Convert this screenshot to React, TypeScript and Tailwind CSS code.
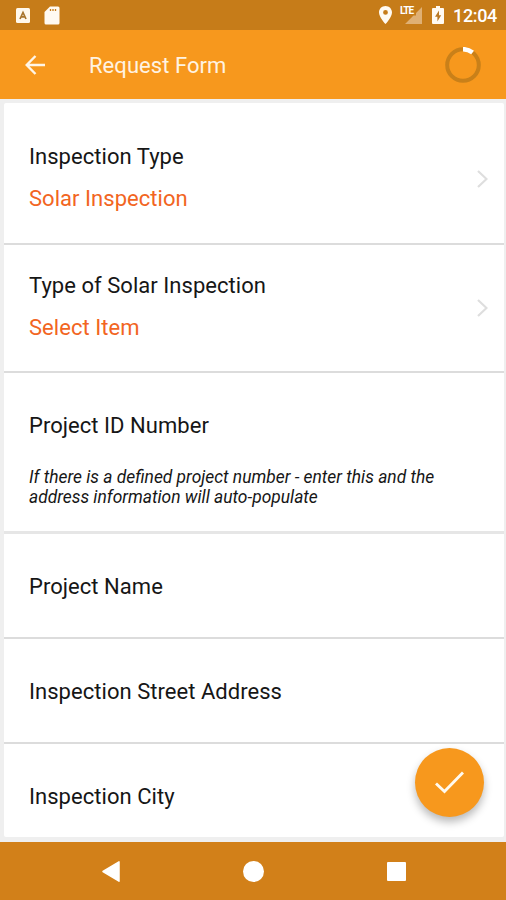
import type { ReactNode } from "react";

function StatusBar() {
  return (
    <div className="flex h-[30px] shrink-0 items-center bg-[#c67c19] text-white">
      <svg className="ml-4 h-[15px] w-[14px]" viewBox="0 0 14 15">
        <rect width="14" height="15" rx="1.5" fill="#fff8ec" />
        <path d="M4 11 L7 4.5 L10 11 M5.2 8.8 H8.8" fill="none" stroke="#a8742c" strokeWidth="1.7" />
      </svg>
      <svg className="ml-[14px] h-[19px] w-4" viewBox="0 0 16 19">
        <path d="M6 0.5 H14 Q15.5 0.5 15.5 2 V17 Q15.5 18.5 14 18.5 H2 Q0.5 18.5 0.5 17 V6 Z" fill="#fffaf2" />
        <path d="M6.5 3 V5 M9 3 V5 M11.5 3 V5" stroke="#c67c19" strokeWidth="1.3" />
      </svg>
      <svg className="ml-auto h-[18px] w-[13px]" viewBox="0 0 13 18">
        <path
          fillRule="evenodd"
          d="M6.5 0 C2.9 0 0 2.8 0 6.4 C0 11 6.5 18 6.5 18 S13 11 13 6.4 C13 2.8 10.1 0 6.5 0 Z M6.5 4 A2.4 2.4 0 1 1 6.5 8.8 A2.4 2.4 0 1 1 6.5 4 Z"
          fill="#fffaf2"
        />
      </svg>
      <div className="ml-[8px] flex h-[18px] w-[22px] items-start">
        <span className="w-[13px] text-[10px] leading-[10px] font-bold tracking-[-1px]">LTE</span>
        <svg className="-ml-[8px] h-[18px] w-[17px] shrink-0" viewBox="0 0 17 18">
          <path d="M17 1 V18 H0 L8.5 9.5 H11 V7 Z" fill="#dfb074" />
        </svg>
      </div>
      <svg className="ml-[10px] h-[18px] w-3" viewBox="0 0 12 18">
        <path d="M4 0 H8 V2 H11 Q12 2 12 3 V17 Q12 18 11 18 H1 Q0 18 0 17 V3 Q0 2 1 2 H4 Z" fill="#fffaf2" />
        <path d="M7 4.5 L3 10.8 H5.4 V15.5 L9.2 9.2 H7 Z" fill="#b97824" />
      </svg>
      <span className="mr-[9px] ml-[9px] w-[44px] pt-[2px] text-[18px] leading-[20px] font-medium tracking-[-0.35px] whitespace-nowrap">
        12:04
      </span>
    </div>
  );
}

function AppBar() {
  return (
    <header className="flex h-[69px] shrink-0 items-center bg-[#f7981d] text-white">
      <svg className="ml-[25px] h-5 w-5" viewBox="0 0 20 20" fill="none" stroke="#fff5e6" strokeWidth="2.4">
        <path d="M20 10 H2 M10.5 1 L1.7 10 L10.5 19" />
      </svg>
      <h1 className="ml-[44px] pt-[3px] text-[22px] leading-[26px] font-normal tracking-[0.05px] text-[#fff3e2]">
        Request Form
      </h1>
      <svg className="mr-[25px] ml-auto h-9 w-9" viewBox="0 0 36 36" fill="none" strokeWidth="4">
        <circle cx="18" cy="18" r="15.8" stroke="#c98019" />
        <path d="M18 2.2 A15.8 15.8 0 0 1 27.6 5.5" stroke="#fff" strokeWidth="4.6" />
      </svg>
    </header>
  );
}

function Label({ children }: { children: ReactNode }) {
  return <div className="text-[22px] leading-[26px] tracking-[0.04px] text-[#161616]">{children}</div>;
}

function SelectRow({ label, value, className }: { label: string; value: string; className: string }) {
  return (
    <div className={`flex items-start justify-between border-b-2 border-[#dcdcdc] pr-[16px] pl-[25px] ${className}`}>
      <div>
        <Label>{label}</Label>
        <div className="mt-4 text-[22px] leading-[26px] tracking-[0.04px] text-[#f26522]">{value}</div>
      </div>
      <svg className="mt-[26px] h-[18px] w-[11px]" viewBox="0 0 11 18" fill="none" stroke="#dedede" strokeWidth="2.2">
        <path d="M1 1 L9.5 9 L1 17" />
      </svg>
    </div>
  );
}

export default function App() {
  return (
    <div className="flex h-[900px] w-[506px] flex-col overflow-hidden bg-[#efefef] font-['Roboto',sans-serif]">
      <StatusBar />
      <AppBar />
      <main className="relative h-[743px] shrink-0 pt-1 pr-[2px] pl-1">
        <div className="h-[734px] overflow-hidden rounded-[2px] bg-white">
          <SelectRow label="Inspection Type" value="Solar Inspection" className="h-[142px] pt-[41px]" />
          <SelectRow label="Type of Solar Inspection" value="Select Item" className="h-[128px] pt-[27.5px]" />
          <div className="h-[161px] border-b-[3px] border-[#e6e6e6] pt-[40px] pl-[25px]">
            <Label>Project ID Number</Label>
            <p className="mt-[28px] text-[17.4px] leading-5 text-[#161616] italic">
              If there is a defined project number - enter this and the
              <br />
              address information will auto-populate
            </p>
          </div>
          <div className="h-[105px] border-b-2 border-[#dcdcdc] pt-[40px] pl-[25px]">
            <Label>Project Name</Label>
          </div>
          <div className="h-[105px] border-b-2 border-[#dcdcdc] pt-[40px] pl-[25px]">
            <Label>Inspection Street Address</Label>
          </div>
          <div className="pt-[40px] pl-[25px]">
            <Label>Inspection City</Label>
          </div>
        </div>
        <button
          aria-label="Submit"
          className="absolute right-[22px] bottom-[25px] flex h-[69px] w-[69px] items-center justify-center rounded-full bg-[#f7981d] shadow-[0_5px_9px_rgba(0,0,0,0.28)]"
        >
          <svg className="h-[23px] w-[29px]" viewBox="0 0 29 23" fill="none" stroke="#fffaf0" strokeWidth="2.9">
            <path d="M1 12.5 L9.5 20.5 L28 1.5" />
          </svg>
        </button>
      </main>
      <nav className="flex h-[58px] shrink-0 items-center bg-[#d28019]">
        <svg className="ml-[102px] h-[21px] w-[18px]" viewBox="0 0 18 21">
          <path d="M17 0.8 V20.2 L1 10.5 Z" fill="#fff" stroke="#fff" strokeWidth="1.5" strokeLinejoin="round" />
        </svg>
        <span className="ml-[123px] h-[21px] w-[21px] rounded-full bg-white" />
        <span className="ml-[123px] h-[19px] w-[19px] rounded-[1px] bg-white" />
      </nav>
    </div>
  );
}
